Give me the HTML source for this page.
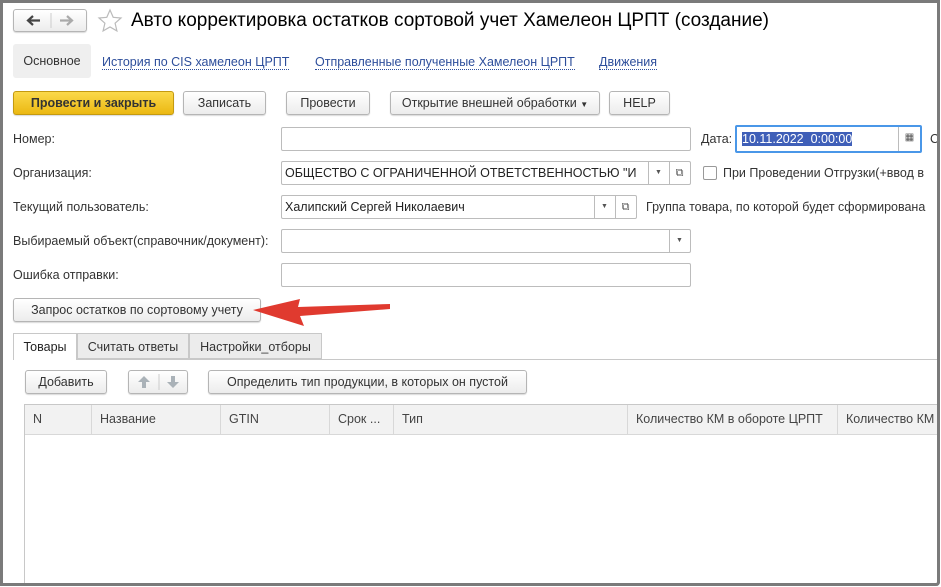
<!DOCTYPE html><html><head><meta charset="utf-8"><style>
*{box-sizing:border-box}
body{margin:0;width:941px;height:587px;background:#fff;font-family:"Liberation Sans",sans-serif;font-size:12.5px;color:#333;position:relative;overflow:hidden}
.frame{position:absolute;left:0;top:0;width:940px;height:586px;border:3px solid #7a7a7a;border-bottom-right-radius:4px}
.a{position:absolute;white-space:nowrap}
.btn{position:absolute;height:24px;border:1px solid #b5b5b5;border-radius:3px;background:linear-gradient(#fff,#ececec);text-align:center;line-height:22px;box-shadow:0 1px 1px rgba(0,0,0,.15);color:#333}
.inp{position:absolute;height:24px;border:1px solid #bcbcbc;border-radius:2px;background:#fff;line-height:22px;padding-left:3px;color:#222;overflow:hidden;white-space:nowrap}
.dd{position:absolute;top:0;width:20px;height:22px;border-left:1px solid #bcbcbc;text-align:center;font-size:7px;line-height:22px;color:#555}
.lnk{position:absolute;color:#2d4e9b;border-bottom:1px dotted #2d4e9b;line-height:14px}
.th{position:absolute;top:405px;height:30px;line-height:28px;padding-left:8px;border-right:1px solid #d8d8d8;color:#444;overflow:hidden;white-space:nowrap}
</style></head><body>
<div class="frame"></div>
<div class="btn" style="left:13px;top:9px;width:74px;height:23px;">
<svg style="position:absolute;left:0;top:0" width="72" height="21"><path d="M14 10.5h12M19 6l-5 4.5 5 4.5" stroke="#444" stroke-width="2.2" fill="none"/><line x1="37" y1="3" x2="37" y2="18" stroke="#ccc"/><path d="M46 10.5h12M53 6l5 4.5-5 4.5" stroke="#aaa" stroke-width="2.2" fill="none"/></svg></div>
<svg style="position:absolute;left:97px;top:8px" width="26" height="26"><path d="M13 2l3.2 7.3 7.8.7-5.9 5.2 1.8 7.7L13 19l-6.9 3.9 1.8-7.7L2 10l7.8-.7z" fill="none" stroke="#bbb" stroke-width="1.2"/></svg>
<div class="a" style="left:131px;top:10px;font-size:19px;color:#000">Авто корректировка остатков сортовой учет Хамелеон ЦРПТ (создание)</div>
<div class="a" style="left:13px;top:44px;width:78px;height:34px;background:#efefef;border-radius:3px;line-height:34px;text-align:center;color:#333">Основное</div>
<div class="lnk" style="left:102px;top:55px">История по CIS хамелеон ЦРПТ</div>
<div class="lnk" style="left:315px;top:55px">Отправленные полученные Хамелеон ЦРПТ</div>
<div class="lnk" style="left:599px;top:55px">Движения</div>
<div class="btn" style="left:13px;top:91px;width:161px;background:linear-gradient(#fbd94a,#ebb812);border-color:#c49a10;font-weight:bold;color:#333">Провести и закрыть</div>
<div class="btn" style="left:183px;top:91px;width:83px">Записать</div>
<div class="btn" style="left:286px;top:91px;width:84px">Провести</div>
<div class="btn" style="left:390px;top:91px;width:210px">Открытие внешней обработки <span style="font-size:8px">▼</span></div>
<div class="btn" style="left:609px;top:91px;width:61px">HELP</div>
<div class="a" style="left:13px;top:132px">Номер:</div>
<div class="inp" style="left:281px;top:127px;width:410px"></div>
<div class="a" style="left:701px;top:132px">Дата:</div>
<div class="inp" style="left:735px;top:125px;width:187px;height:28px;border:2px solid #4a97e8;line-height:24px;padding-left:5px"><span style="background:#3f5fb8;color:#fff">10.11.2022&nbsp; 0:00:00</span><div class="dd" style="left:161px;height:24px;font-size:10px;width:22px">▦</div></div>
<div class="a" style="left:930px;top:132px">С</div>
<div class="a" style="left:13px;top:166px">Организация:</div>
<div class="inp" style="left:281px;top:161px;width:410px">ОБЩЕСТВО С ОГРАНИЧЕННОЙ ОТВЕТСТВЕННОСТЬЮ "И<div class="dd" style="left:366px">▼</div><div class="dd" style="left:387px;font-size:11px">⧉</div></div>
<div style="position:absolute;left:703px;top:166px;width:14px;height:14px;border:1px solid #999;border-radius:2px"></div>
<div class="a" style="left:723px;top:166px">При Проведении Отгрузки(+ввод в</div>
<div class="a" style="left:13px;top:200px">Текущий пользователь:</div>
<div class="inp" style="left:281px;top:195px;width:356px">Халипский Сергей Николаевич<div class="dd" style="left:312px">▼</div><div class="dd" style="left:333px;font-size:11px">⧉</div></div>
<div class="a" style="left:646px;top:200px">Группа товара, по которой будет сформирована</div>
<div class="a" style="left:13px;top:234px">Выбираемый объект(справочник/документ):</div>
<div class="inp" style="left:281px;top:229px;width:410px"><div class="dd" style="left:387px">▼</div></div>
<div class="a" style="left:13px;top:268px">Ошибка отправки:</div>
<div class="inp" style="left:281px;top:263px;width:410px"></div>
<div class="btn" style="left:13px;top:298px;width:248px">Запрос остатков по сортовому учету</div>
<svg style="position:absolute;left:248px;top:290px" width="145" height="40"><path d="M142 14 L50 17 L52 9 L5 20 L56 36 L52 26 L142 19 Z" fill="#e03a2f"/></svg>
<div style="position:absolute;left:13px;top:359px;width:925px;border-top:1px solid #c8c8c8"></div>
<div class="a" style="left:13px;top:333px;width:64px;height:27px;background:#fff;border:1px solid #c8c8c8;border-bottom:none;line-height:26px;text-align:center;color:#222">Товары</div>
<div class="a" style="left:77px;top:333px;width:112px;height:26px;background:#ececec;border:1px solid #c8c8c8;line-height:26px;text-align:center">Считать ответы</div>
<div class="a" style="left:189px;top:333px;width:133px;height:26px;background:#ececec;border:1px solid #c8c8c8;line-height:26px;text-align:center">Настройки_отборы</div>
<div class="btn" style="left:25px;top:370px;width:82px">Добавить</div>
<div class="btn" style="left:128px;top:370px;width:60px">
<svg style="position:absolute;left:0;top:0" width="58" height="22"><path d="M15 5l-6 6h4v6h4v-6h4z" fill="#aab2b8"/><line x1="30" y1="3" x2="30" y2="19" stroke="#ccc"/><path d="M44 17l-6-6h4V5h4v6h4z" fill="#aab2b8"/></svg></div>
<div class="btn" style="left:208px;top:370px;width:319px">Определить тип продукции, в которых он пустой</div>
<div style="position:absolute;left:24px;top:404px;width:914px;height:182px;border:1px solid #c8c8c8;border-right:none;background:#fff"></div>
<div style="position:absolute;left:25px;top:405px;width:913px;height:30px;background:#f2f2f2;border-bottom:1px solid #d8d8d8"></div>
<div class="th" style="left:25px;width:67px">N</div>
<div class="th" style="left:92px;width:129px">Название</div>
<div class="th" style="left:221px;width:109px">GTIN</div>
<div class="th" style="left:330px;width:64px">Срок ...</div>
<div class="th" style="left:394px;width:234px">Тип</div>
<div class="th" style="left:628px;width:210px">Количество КМ в обороте ЦРПТ</div>
<div class="th" style="left:838px;width:100px;border-right:none">Количество КМ</div>
<div class="frame" style="background:none"></div>
</body></html>
